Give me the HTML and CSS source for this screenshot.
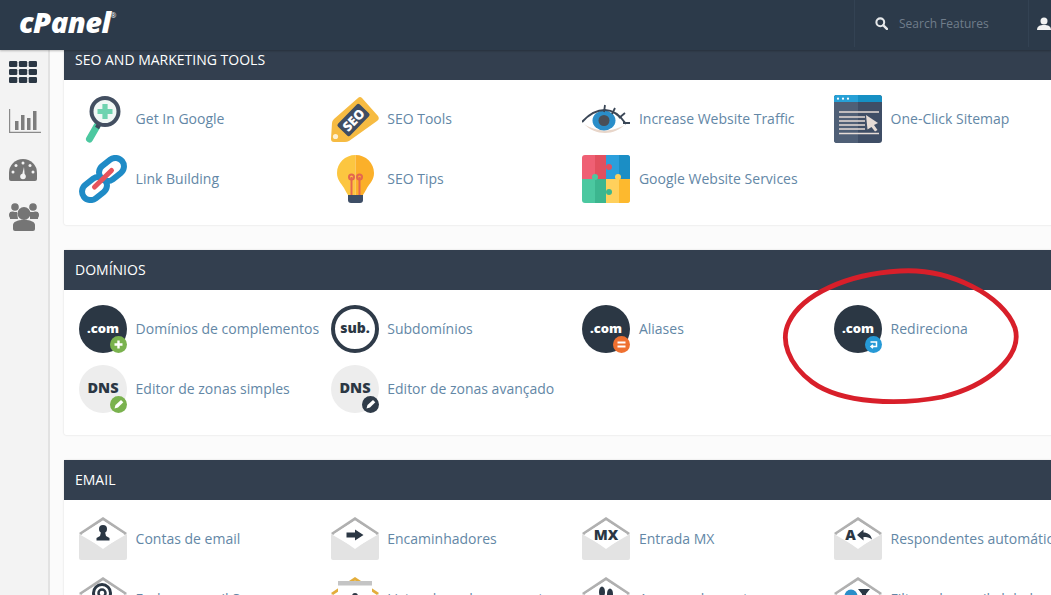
FILE: index.html
```html
<!DOCTYPE html>
<html lang="pt">
<head>
<meta charset="utf-8">
<title>cPanel</title>
<link rel="stylesheet" href="styles.css">
</head>
<body>
<svg class="defs" width="0" height="0" aria-hidden="true">
  <defs>
    <symbol id="env" viewBox="0 0 48 48">
      <path d="M0 19 24 33 48 19V43a2 2 0 0 1-2 2H2a2 2 0 0 1-2-2Z" fill="#e3e3e3"/>
      <path d="M0 18 24 2 48 18 46 20 24 5.500 2 20Z" fill="#b0b0b0"/>
      <path d="M3 19 24 5.500 45 19 24 34Z" fill="#fff"/>
    </symbol>
    <symbol id="com" viewBox="0 0 48 48">
      <circle cx="24" cy="24" r="24" fill="#2b3744"/>
      <text x="24" y="27.500" text-anchor="middle" class="t-com">.com</text>
    </symbol>
    <symbol id="dns" viewBox="0 0 48 48">
      <circle cx="24" cy="24" r="24" fill="#ededed"/>
      <text x="24" y="28" text-anchor="middle" class="t-dns">DNS</text>
    </symbol>
    <symbol id="pencil" viewBox="0 0 18 18">
      <path d="M5 13 6 9.500 11.500 4.500 13.800 6.800 8.500 12Z" fill="#fff"/>
    </symbol>
  </defs>
</svg>

<header class="topbar">
  <div class="logo">cPanel<sup class="reg">®</sup></div>
  <div class="search">
    <svg class="search-icon" viewBox="0 0 14 14"><circle cx="5.700" cy="5.700" r="4.200" fill="none" stroke="#e6e8ea" stroke-width="2.200"/><path d="M9 9l3.800 3.800" stroke="#e6e8ea" stroke-width="2.600" stroke-linecap="round"/></svg>
    <span class="search-text">Search Features</span>
  </div>
  <div class="user">
    <svg class="user-icon" viewBox="0 0 14 14"><circle cx="7" cy="4" r="3.500" fill="#f2f2f2"/><path d="M0 13c0-4 3-5 7-5s7 1 7 5Z" fill="#f2f2f2"/></svg>
  </div>
</header>

<div class="shell">
  <nav class="sidebar">
    <svg class="nav nav-grid" viewBox="0 0 28 22">
      <g fill="#2b3744">
        <rect width="8.300" height="6" rx="1.200"/><rect x="9.900" width="8.300" height="6" rx="1.200"/><rect x="19.700" width="8.300" height="6" rx="1.200"/>
        <rect y="8" width="8.300" height="6" rx="1.200"/><rect x="9.900" y="8" width="8.300" height="6" rx="1.200"/><rect x="19.700" y="8" width="8.300" height="6" rx="1.200"/>
        <rect y="16" width="8.300" height="6" rx="1.200"/><rect x="9.900" y="16" width="8.300" height="6" rx="1.200"/><rect x="19.700" y="16" width="8.300" height="6" rx="1.200"/>
      </g>
    </svg>
    <svg class="nav nav-stats" viewBox="0 0 32 24">
      <path d="M.6 0V23.400H32" fill="none" stroke="#8a8a8a" stroke-width="1.200"/>
      <g fill="#7d7d7d"><rect x="6" y="12" width="3.500" height="9"/><rect x="12" y="6" width="3.500" height="15"/><rect x="18" y="9" width="3.500" height="12"/><rect x="24" y="2" width="3.500" height="19"/></g>
    </svg>
    <svg class="nav nav-gauge" viewBox="0 0 28 22">
      <path d="M0 20V14a14 14 0 0 1 28 0V20a2 2 0 0 1-2 2H2a2 2 0 0 1-2-2Z" fill="#757575"/>
      <g fill="#f3f3f3"><circle cx="14" cy="4" r="1.500"/><circle cx="7" cy="6.500" r="1.500"/><circle cx="21" cy="6.500" r="1.500"/><circle cx="4" cy="13" r="1.500"/><circle cx="24" cy="13" r="1.500"/><circle cx="14" cy="17.500" r="2.800"/><path d="M12.800 17 15 8 15.800 17Z"/></g>
    </svg>
    <svg class="nav nav-users" viewBox="0 0 30 28">
      <g fill="#757575"><circle cx="6" cy="4" r="3.800"/><circle cx="24" cy="4" r="3.800"/><circle cx="3.500" cy="12" r="3.500"/><circle cx="26.500" cy="12" r="3.500"/><path d="M1 9H8L9 16H1Z"/><path d="M21 9H29V16H21Z"/><circle cx="15" cy="10.500" r="6.500"/><path d="M4 26V22c0-3 4-5 11-5s11 2 11 5V26a2 2 0 0 1-2 2H6a2 2 0 0 1-2-2Z"/></g>
    </svg>
  </nav>

  <main class="content">
    <div class="scroller">

      <section class="panel">
        <h2 class="panel-head">SEO and Marketing Tools</h2>
        <div class="panel-body">
          <a class="feature">
            <svg class="ico" viewBox="0 0 48 48">
              <path d="M18 31 10.500 44" stroke="#4cc8a0" stroke-width="7" stroke-linecap="round"/>
              <path d="M21.500 27 18 33" stroke="#3c4a5c" stroke-width="4.500"/>
              <circle cx="26" cy="16.500" r="13.500" fill="#f1f8f6" stroke="#434f61" stroke-width="4"/>
              <path d="M26 9v15M18.500 16.500h15" stroke="#6fd3b0" stroke-width="5.200"/>
            </svg>
            <span>Get In Google</span>
          </a>
          <a class="feature">
            <svg class="ico" viewBox="0 0 48 48">
              <path d="M27 3Q29 1 31 3L47 21Q49 24 46 26L18 46Q16 47 14 47H3Q0 47 0 44L1 28Q1 26 3 24Z" fill="#f6bb42"/>
              <g transform="rotate(-46 22.500 25)">
                <rect x="7" y="16.500" width="31" height="17" rx="2" fill="#3f4d63"/>
                <text x="22.500" y="29.800" text-anchor="middle" class="t-seo">SEO</text>
              </g>
              <circle cx="4.500" cy="41.500" r="2.600" fill="#fdf1d3"/>
            </svg>
            <span>SEO Tools</span>
          </a>
          <a class="feature">
            <svg class="ico" viewBox="0 0 48 48">
              <path d="M0 27C8 18 15 15 23 15S37 19 44 29C37 35 30 38 23 38S8 35 0 27Z" fill="#fff"/>
              <path d="M2 29C8 35 15 38 23 38S37 35 44 29C38 33 30 35.500 23 35.500S8 33 2 29Z" fill="#e8d6ca"/>
              <ellipse cx="22" cy="25.500" rx="11.500" ry="10" fill="#2a8ec9"/>
              <circle cx="22" cy="25.500" r="5.500" fill="#4a4f57"/>
              <path d="M0 27C8 18 15 15 23 15S37 19 44 29" fill="none" stroke="#3a4656" stroke-width="2"/>
              <path d="M23 10 22 17M33 13 30 19M43 18 37 23M48 28H41" stroke="#3a4656" stroke-width="1.800"/>
            </svg>
            <span>Increase Website Traffic</span>
          </a>
          <a class="feature">
            <svg class="ico" viewBox="0 0 48 48">
              <rect width="48" height="48" rx="3" fill="#3f4e66"/>
              <path d="M3 0H24V48H3a3 3 0 0 1-3-3V3a3 3 0 0 1 3-3Z" fill="#4f5f76"/>
              <path d="M3 0H45a3 3 0 0 1 3 3V7H0V3a3 3 0 0 1 3-3Z" fill="#1690c4"/>
              <path d="M3 0H24V7H0V3a3 3 0 0 1 3-3Z" fill="#27a0d6"/>
              <g fill="#fff"><circle cx="4" cy="3.700" r="1.100"/><circle cx="9" cy="3.700" r="1.100"/><circle cx="14" cy="3.700" r="1.100"/></g>
              <path d="M5 17H45M5 22H31M5 26H31M5 30H31M5 34H31M5 38.500H45" stroke="#e6dcd6" stroke-width="1.700"/>
              <path d="M32 20 44 28 40 30 43.500 35 41 36.500 37.500 32 33.500 34.500Z" fill="#e6dcd6"/>
            </svg>
            <span>One-Click Sitemap</span>
          </a>
          <a class="feature">
            <svg class="ico" viewBox="0 0 48 48">
              <g fill="none" stroke="#1f8bc6" stroke-width="6">
                <rect x="2" y="25" width="27" height="17" rx="8.500" transform="rotate(-38 15.500 33.500)"/>
                <rect x="19" y="6" width="27" height="17" rx="8.500" transform="rotate(-38 32.500 14.500)"/>
              </g>
              <path d="M15.500 32 32.500 15.500" stroke="#e5535c" stroke-width="5" stroke-linecap="round"/>
            </svg>
            <span>Link Building</span>
          </a>
          <a class="feature">
            <svg class="ico" viewBox="0 0 48 48">
              <path d="M24.500 0C14 0 6 8 6 18 6 25 10 28 13 33 15 37 17 40 17 40H24.500Z" fill="#fcc640"/>
              <path d="M24.500 0C35 0 43 8 43 18 43 25 39 28 36 33 34 37 32 40 32 40H24.500Z" fill="#fbb02a"/>
              <path d="M20.500 40V22M28.500 40V22" stroke="#e5674e" stroke-width="2"/>
              <circle cx="20.500" cy="22" r="2.500" fill="none" stroke="#e5674e" stroke-width="2"/>
              <circle cx="28.500" cy="22" r="2.500" fill="none" stroke="#e5674e" stroke-width="2"/>
              <path d="M17 40H32V45Q32 48 29 48H20Q17 48 17 45Z" fill="#3e4e66"/>
            </svg>
            <span>SEO Tips</span>
          </a>
          <a class="feature">
            <svg class="ico" viewBox="0 0 48 48">
              <path d="M3 0H24V24H0V3a3 3 0 0 1 3-3Z" fill="#ef6074"/>
              <rect x="13" width="11" height="24" fill="#e2505f"/>
              <path d="M24 0H45a3 3 0 0 1 3 3V24H24Z" fill="#2b9fdc"/>
              <path d="M37 0H45a3 3 0 0 1 3 3V24H37Z" fill="#1b8ec5"/>
              <path d="M0 24H24V48H3a3 3 0 0 1-3-3Z" fill="#4bc8a0"/>
              <rect x="13" y="24" width="11" height="24" fill="#3cb68f"/>
              <path d="M24 24H48V45a3 3 0 0 1-3 3H24Z" fill="#ffd05c"/>
              <path d="M37 24H48V45a3 3 0 0 1-3 3H37Z" fill="#fdb92e"/>
              <circle cx="13" cy="22" r="3" fill="#4bc8a0"/>
              <circle cx="27" cy="12" r="3" fill="#e2505f"/>
              <circle cx="36" cy="22" r="3" fill="#ffd05c"/>
              <circle cx="27" cy="37" r="3" fill="#3cb68f"/>
            </svg>
            <span>Google Website Services</span>
          </a>
        </div>
      </section>

      <section class="panel">
        <h2 class="panel-head">Domínios</h2>
        <div class="panel-body">
          <a class="feature">
            <svg class="ico" viewBox="0 0 48 48">
              <use href="#com" width="48" height="48"/>
              <circle cx="39.500" cy="39.500" r="8.500" fill="#7ab24e"/>
              <path d="M39.500 35.500v8M35.500 39.500h8" stroke="#fff" stroke-width="2.400"/>
            </svg>
            <span>Domínios de complementos</span>
          </a>
          <a class="feature">
            <svg class="ico" viewBox="0 0 48 48">
              <circle cx="24" cy="24" r="22" fill="#fff" stroke="#2f3b49" stroke-width="4"/>
              <text x="24" y="27.500" text-anchor="middle" class="t-sub">sub.</text>
            </svg>
            <span>Subdomínios</span>
          </a>
          <a class="feature">
            <svg class="ico" viewBox="0 0 48 48">
              <use href="#com" width="48" height="48"/>
              <circle cx="39.500" cy="39.500" r="8.500" fill="#ef7030"/>
              <path d="M35.500 37.500h8M35.500 41.500h8" stroke="#fff" stroke-width="2"/>
            </svg>
            <span>Aliases</span>
          </a>
          <a class="feature">
            <svg class="ico" viewBox="0 0 48 48">
              <use href="#com" width="48" height="48"/>
              <circle cx="39.500" cy="39.500" r="8.500" fill="#2699d6"/>
              <path d="M36.500 37H42.500V41.500H37.500M39 39.800 37 41.500 39 43.200" fill="none" stroke="#fff" stroke-width="1.500"/>
            </svg>
            <span>Redireciona</span>
          </a>
          <a class="feature">
            <svg class="ico" viewBox="0 0 48 48">
              <use href="#dns" width="48" height="48"/>
              <circle cx="39.500" cy="39.500" r="8.500" fill="#7ab24e"/>
              <use href="#pencil" x="30.500" y="30.500" width="18" height="18"/>
            </svg>
            <span>Editor de zonas simples</span>
          </a>
          <a class="feature">
            <svg class="ico" viewBox="0 0 48 48">
              <use href="#dns" width="48" height="48"/>
              <circle cx="39.500" cy="39.500" r="8.500" fill="#2f3b49"/>
              <use href="#pencil" x="30.500" y="30.500" width="18" height="18"/>
            </svg>
            <span>Editor de zonas avançado</span>
          </a>
        </div>
      </section>

      <section class="panel">
        <h2 class="panel-head">Email</h2>
        <div class="panel-body">
          <a class="feature">
            <svg class="ico" viewBox="0 0 48 48">
              <use href="#env" width="48" height="48"/>
              <circle cx="24" cy="14" r="4" fill="#2b3744"/>
              <path d="M22 17H26L27 21 30.500 23V25.500H17.500V23L21 21Z" fill="#2b3744"/>
            </svg>
            <span>Contas de email</span>
          </a>
          <a class="feature">
            <svg class="ico" viewBox="0 0 48 48">
              <use href="#env" width="48" height="48"/>
              <path d="M15.500 17.500H24V14.500L32.500 20 24 25.500V22.500H15.500Z" fill="#2b3744"/>
            </svg>
            <span>Encaminhadores</span>
          </a>
          <a class="feature">
            <svg class="ico" viewBox="0 0 48 48">
              <use href="#env" width="48" height="48"/>
              <text x="24" y="25" text-anchor="middle" class="t-mx">MX</text>
            </svg>
            <span>Entrada MX</span>
          </a>
          <a class="feature">
            <svg class="ico" viewBox="0 0 48 48">
              <use href="#env" width="48" height="48"/>
              <text x="16.500" y="25" text-anchor="middle" class="t-mx">A</text>
              <path d="M23 20 29.500 14.500V17.500C33.500 17.500 37 19.500 38 24.500 35.500 22.500 33 22 29.500 22V25.500Z" fill="#2b3744"/>
            </svg>
            <span>Respondentes automáticos</span>
          </a>
          <a class="feature">
            <svg class="ico" viewBox="0 0 48 48">
              <use href="#env" width="48" height="48"/>
              <circle cx="23" cy="18" r="8.500" fill="none" stroke="#2b3744" stroke-width="3"/>
              <circle cx="23" cy="18" r="3.500" fill="none" stroke="#2b3744" stroke-width="2.500"/>
            </svg>
            <span>Endereço mail S</span>
          </a>
          <a class="feature">
            <svg class="ico" viewBox="0 0 48 48">
              <path d="M0 19 24 33 48 19V43a2 2 0 0 1-2 2H2a2 2 0 0 1-2-2Z" fill="#e3e3e3"/>
              <path d="M0 18 24 2 48 18 46 20 24 5.500 2 20Z" fill="#e3ad3b"/>
              <rect x="7" y="6" width="34" height="24" fill="#fff"/>
              <rect x="7" y="6" width="34" height="4.500" fill="#c4c4c4"/>
              <circle cx="24" cy="21" r="3" fill="#2b3744"/>
            </svg>
            <span>Listas de endereçamento</span>
          </a>
          <a class="feature">
            <svg class="ico" viewBox="0 0 48 48">
              <use href="#env" width="48" height="48"/>
              <ellipse cx="20" cy="17" rx="3" ry="5.500" fill="#2b3744"/>
              <ellipse cx="28" cy="19" rx="3" ry="5.500" fill="#2b3744"/>
            </svg>
            <span>Acompanhar entrega</span>
          </a>
          <a class="feature">
            <svg class="ico" viewBox="0 0 48 48">
              <use href="#env" width="48" height="48"/>
              <circle cx="17" cy="21" r="6.500" fill="#2a8ec9"/>
              <path d="M24 14H36L32 19V25H28V19Z" fill="#2b3744"/>
            </svg>
            <span>Filtros de email global</span>
          </a>
        </div>
      </section>

    </div>
  </main>
</div>

<svg class="annotation" viewBox="0 0 240 140">
  <path d="M118 3C168 0 222 28 233 60 241 88 206 118 160 129 118 137 60 136 30 114 6 96-2 72 7 54 20 27 64 6 118 3Z" fill="none" stroke="#d81f2a" stroke-width="4.800"/>
</svg>
</body>
</html>
```

FILE: styles.css
```css
* {
  box-sizing: border-box;
}

html,
body {
  margin: 0;
  height: 100%;
}

body {
  position: relative;
  display: flex;
  flex-direction: column;
  overflow: hidden;
  background: #fbfbfb;
  font-family: "Open Sans", "Noto Sans", sans-serif;
  font-size: 14px;
}

.defs {
  position: absolute;
}

.topbar {
  position: relative;
  z-index: 2;
  flex: none;
  display: flex;
  align-items: stretch;
  height: 50px;
  background: #2c3a4a;
  box-shadow: 0 1px 2px rgba(0, 0, 0, 0.25);
}

.logo {
  margin: 4px auto 0 19px;
  color: #fff;
  font-family: "Open Sans", sans-serif;
  font-size: 29px;
  font-weight: 800;
  font-style: italic;
  line-height: 36px;
  letter-spacing: -0.500px;
}

.reg {
  font-size: 7px;
  font-style: normal;
  font-weight: 400;
  vertical-align: 15px;
  line-height: 0;
}

.search {
  display: flex;
  align-items: center;
  gap: 11px;
  width: 175px;
  margin-bottom: 3px;
  padding-left: 20px;
  border-left: 1px solid #334253;
  border-right: 1px solid #334253;
}

.search-icon {
  width: 13px;
  height: 13px;
}

.search-text {
  color: #707d8b;
  font-size: 12px;
}

.user {
  display: flex;
  align-items: center;
  width: 22px;
  margin-bottom: 3px;
  padding-left: 8px;
  overflow: hidden;
}

.user-icon {
  flex: none;
  width: 14px;
  height: 14px;
}

.shell {
  flex: 1;
  display: flex;
  min-height: 0;
}

.sidebar {
  flex: none;
  display: flex;
  flex-direction: column;
  align-items: flex-start;
  gap: 26px;
  width: 50px;
  padding: 11px 0 0 9px;
  background: #f3f3f3;
  border-right: 2px solid #e2e2e2;
}

.nav-grid,
.nav-gauge {
  width: 28px;
  height: 22px;
}

.nav-stats {
  width: 32px;
  height: 24px;
}

.nav-users {
  width: 30px;
  height: 28px;
  margin-top: -4px;
}

.content {
  flex: 1;
  min-width: 0;
  overflow: hidden;
  padding-left: 14px;
}

.scroller {
  width: 1030px;
  margin-top: -10px;
}

.panel {
  margin-bottom: 25px;
  background: #fff;
  border-radius: 2px;
  box-shadow: 0 0 2px rgba(0, 0, 0, 0.16);
}

.panel-head {
  height: 40px;
  margin: 0;
  padding-left: 11px;
  background: #333f4f;
  color: #fff;
  font-size: 14px;
  font-weight: 400;
  line-height: 40px;
  text-transform: uppercase;
}

.panel-body {
  display: grid;
  grid-template-columns: repeat(4, 251.670px);
  grid-auto-rows: 48px;
  row-gap: 12px;
  padding: 15px 15px 22px;
}

.feature {
  display: flex;
  align-items: center;
  gap: 8.600px;
  color: #6387a6;
  white-space: nowrap;
}

.feature span {
  margin-bottom: 2px;
}

.ico {
  flex: none;
  width: 48px;
  height: 48px;
}

.t-com {
  fill: #fff;
  font-family: "Open Sans", sans-serif;
  font-size: 13px;
  font-weight: 800;
}

.t-dns {
  fill: #2b3744;
  font-family: "Open Sans", sans-serif;
  font-size: 14.500px;
  font-weight: 800;
}

.t-sub {
  fill: #2b3744;
  font-family: "Open Sans", sans-serif;
  font-size: 14px;
  font-weight: 800;
}

.t-seo {
  fill: #fff;
  font-family: "Open Sans", sans-serif;
  font-size: 13px;
  font-weight: 800;
}

.t-mx {
  fill: #2b3744;
  font-family: "Open Sans", sans-serif;
  font-size: 14.500px;
  font-weight: 800;
}

.annotation {
  position: absolute;
  z-index: 3;
  left: 782px;
  top: 268px;
  width: 240px;
  height: 140px;
}
```
